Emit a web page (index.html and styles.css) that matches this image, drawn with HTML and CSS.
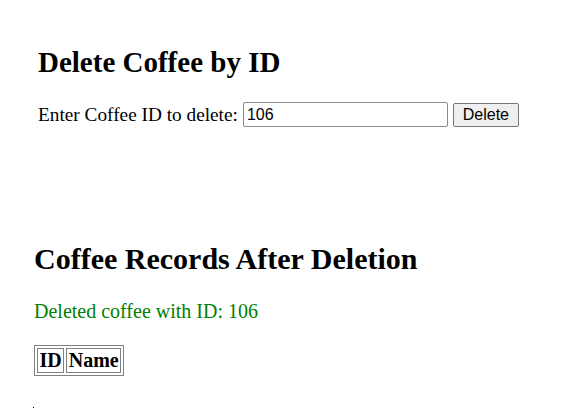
FILE: index.html
```html
<!DOCTYPE html>
<html lang="en">
<head>
<meta charset="utf-8">
<title>Delete Coffee by ID</title>
<link rel="stylesheet" href="styles.css">
</head>
<body>
  <section class="delete-section">
    <h2 class="delete-title">Delete Coffee by ID</h2>
    <form class="delete-form">
      <label class="delete-label" for="coffee-id">Enter Coffee ID to delete:</label>
      <input class="delete-input" id="coffee-id" type="text" value="106">
      <button class="delete-button" type="button">Delete</button>
    </form>
  </section>
  <section class="records-section">
    <h2 class="records-title">Coffee Records After Deletion</h2>
    <p class="records-message">Deleted coffee with ID: 106</p>
    <table class="records-table">
      <tr><th>ID</th><th>Name</th></tr>
    </table>
    <div class="records-dot"></div>
  </section>
</body>
</html>
```

FILE: styles.css
```css
html, body {
  margin: 0;
  padding: 0;
  background: #ffffff;
  color: #000000;
  font-family: "Liberation Serif", "Times New Roman", serif;
  overflow: hidden;
}

.delete-section {
  padding: 46px 0 0 38px;
  display: flex;
  flex-direction: column;
}

.delete-title {
  margin: 0;
  font-size: 29px;
  font-weight: bold;
  line-height: 33px;
}

.delete-form {
  margin-top: 23px;
  display: flex;
  align-items: center;
  gap: 5px;
  font-size: 19.3px;
}

.delete-input {
  box-sizing: border-box;
  width: 205px;
  height: 25px;
  margin: 0;
  padding: 1px 3px;
  border: 1px solid #8a8a8a;
  border-radius: 2px;
  font-family: "Liberation Sans", Arial, sans-serif;
  font-size: 16px;
  color: #000;
  background: #fff;
}

.delete-button {
  box-sizing: border-box;
  width: 66px;
  height: 24px;
  margin: 0;
  padding: 0 6px;
  border: 1px solid #767676;
  border-radius: 2px;
  background: #efefef;
  font-family: "Liberation Sans", Arial, sans-serif;
  font-size: 16px;
  color: #000;
}

.records-section {
  padding: 114px 0 0 34px;
  display: flex;
  flex-direction: column;
  align-items: flex-start;
}

.records-title {
  margin: 0;
  font-size: 30px;
  font-weight: bold;
  line-height: 35px;
}

.records-message {
  margin: 24px 0 0 0;
  font-size: 20px;
  line-height: 23px;
  color: #008000;
}

.records-table {
  margin-top: 22px;
  border: 1px solid #808080;
  border-spacing: 2px;
  font-size: 20px;
}

.records-table th {
  border: 1px solid #808080;
  padding: 1px 1.5px;
  font-weight: bold;
  line-height: 21px;
}

.records-dot {
  width: 1px;
  height: 1px;
  margin-top: 31px;
  margin-left: -1px;
  background: #000;
}
```
